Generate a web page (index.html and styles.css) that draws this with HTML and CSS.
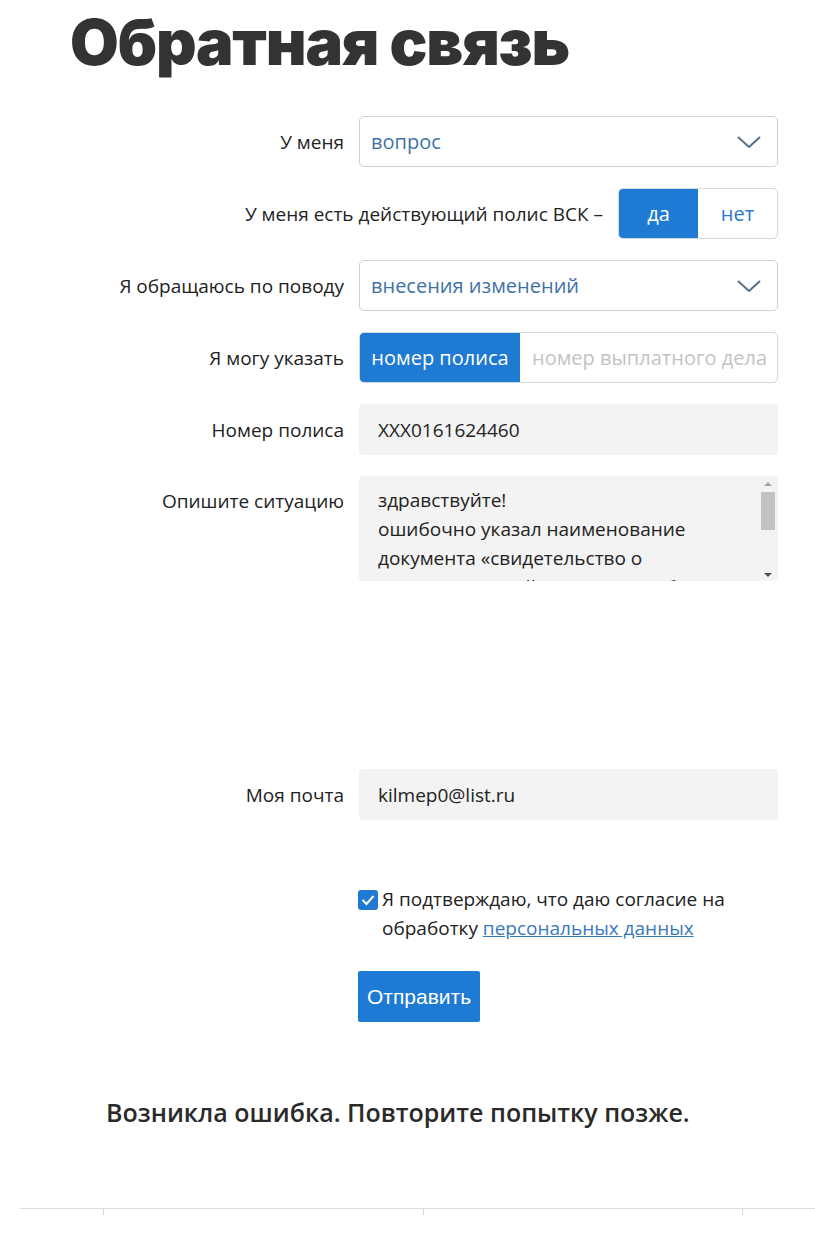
FILE: index.html
```html
<!DOCTYPE html>
<html lang="ru">
<head>
  <meta charset="UTF-8">
  <title>Обратная связь</title>
  <link rel="stylesheet" href="styles.css">
</head>
<body>
  <div class="page">
    <h1 class="title">Обратная связь</h1>

    <form class="feedback">
      <div class="row">
        <label class="label">У меня</label>
        <div class="select">
          <span>вопрос</span>
          <svg class="chevron" width="24" height="12" viewBox="0 0 24 12"><path d="M1 1 L12 11 L23 1" fill="none" stroke="#5b6f87" stroke-width="2"/></svg>
        </div>
      </div>

      <div class="row">
        <label class="label">У меня есть действующий полис ВСК –</label>
        <div class="toggle toggle-small">
          <span class="opt active">да</span>
          <span class="opt">нет</span>
        </div>
      </div>

      <div class="row">
        <label class="label">Я обращаюсь по поводу</label>
        <div class="select">
          <span>внесения изменений</span>
          <svg class="chevron" width="24" height="12" viewBox="0 0 24 12"><path d="M1 1 L12 11 L23 1" fill="none" stroke="#5b6f87" stroke-width="2"/></svg>
        </div>
      </div>

      <div class="row">
        <label class="label">Я могу указать</label>
        <div class="toggle toggle-wide">
          <span class="opt active">номер полиса</span>
          <span class="opt muted">номер выплатного дела</span>
        </div>
      </div>

      <div class="row">
        <label class="label">Номер полиса</label>
        <div class="input">XXX0161624460</div>
      </div>

      <div class="row row-top">
        <label class="label">Опишите ситуацию</label>
        <div class="textarea">
          <div class="textarea-text">здравствуйте!<br>ошибочно указал наименование документа «свидетельство о государственной регистрации брака»</div>
          <div class="scrollbar">
            <span class="arrow-up"></span>
            <span class="thumb"></span>
            <span class="arrow-down"></span>
          </div>
        </div>
      </div>

      <div class="row row-mail">
        <label class="label">Моя почта</label>
        <div class="input">kilmep0@list.ru</div>
      </div>

      <div class="agree">
        <span class="checkbox">
          <svg width="14" height="12" viewBox="0 0 14 12"><path d="M1.5 6 L5.5 10 L12.5 2" fill="none" stroke="#fff" stroke-width="2"/></svg>
        </span>
        <span class="agree-text">Я подтверждаю, что даю согласие на обработку <a href="#">персональных данных</a></span>
      </div>

      <div class="submit-row">
        <button type="button" class="submit">Отправить</button>
      </div>
    </form>

    <p class="error">Возникла ошибка. Повторите попытку позже.</p>
  </div>

  <div class="footer-line">
    <span class="tick"></span>
    <span class="tick"></span>
    <span class="tick"></span>
  </div>
</body>
</html>
```

FILE: styles.css
```css
body {
  margin: 0;
  background: #fff;
  font-family: 'Open Sans', sans-serif;
  color: #222;
}

.page {
  width: 815px;
  box-sizing: border-box;
  padding: 0 37px 0 0;
}

.title {
  margin: 0;
  padding: 2px 0 0 70px;
  font-family: 'Inter', sans-serif;
  font-weight: 900;
  font-size: 63px;
  line-height: 80px;
  color: #333;
  letter-spacing: -1.2px;
}

.feedback {
  margin-top: 34px;
  display: flex;
  flex-direction: column;
  gap: 21px;
}

.row {
  display: flex;
  justify-content: flex-end;
  align-items: center;
  gap: 15px;
}

.row-top {
  align-items: flex-start;
}

.row-top .label {
  padding-top: 12px;
}

.row-mail {
  margin-top: 167px;
}

.label {
  font-size: 19px;
  color: #222;
  text-align: right;
}

.select {
  width: 419px;
  height: 51px;
  box-sizing: border-box;
  border: 1px solid #c9d1da;
  border-radius: 5px;
  padding: 0 16px 0 11px;
  display: flex;
  align-items: center;
  justify-content: space-between;
  font-size: 20px;
  color: #3f72a6;
}

.toggle {
  height: 51px;
  box-sizing: border-box;
  border: 1px solid #d3d9df;
  border-radius: 5px;
  display: flex;
  overflow: hidden;
  font-size: 20px;
  white-space: nowrap;
}

.toggle-small {
  width: 160px;
}

.toggle-small .opt {
  flex: 1;
  justify-content: center;
}

.toggle-wide {
  width: 419px;
}

.toggle-wide .opt {
  flex: 1;
  padding: 0 12px;
  overflow: hidden;
}

.toggle-wide .opt.active {
  flex: none;
  width: 160px;
  box-sizing: border-box;
  justify-content: center;
}

.opt {
  display: flex;
  align-items: center;
  color: #2a79cc;
}

.opt.active {
  background: #1f7ad3;
  color: #fff;
}

.opt.muted {
  color: #c3c3c3;
}

.input {
  width: 419px;
  height: 51px;
  box-sizing: border-box;
  background: #f3f3f3;
  border-radius: 4px;
  padding: 0 19px;
  display: flex;
  align-items: center;
  font-size: 19px;
  color: #222;
}

.textarea {
  width: 419px;
  height: 105px;
  box-sizing: border-box;
  background: #f3f3f3;
  border-radius: 4px;
  display: flex;
  overflow: hidden;
}

.textarea-text {
  flex: 1;
  padding: 10px 12px 0 19px;
  font-size: 19px;
  line-height: 29px;
  color: #222;
}

.scrollbar {
  width: 16px;
  margin-right: 2px;
  display: flex;
  flex-direction: column;
  align-items: center;
  padding: 6px 0 4px;
}

.arrow-up {
  width: 0;
  height: 0;
  border-left: 4px solid transparent;
  border-right: 4px solid transparent;
  border-bottom: 4px solid #a3a3a3;
}

.thumb {
  width: 14px;
  height: 38px;
  margin: 6px 0 auto;
  background: #c1c1c1;
}

.arrow-down {
  width: 0;
  height: 0;
  border-left: 4px solid transparent;
  border-right: 4px solid transparent;
  border-top: 4px solid #505050;
}

.agree {
  margin: 44px 0 0 358px;
  display: flex;
  align-items: flex-start;
  gap: 4px;
  font-size: 19px;
  line-height: 29px;
  color: #222;
}

.checkbox {
  flex: none;
  width: 20px;
  height: 20px;
  margin-top: 5px;
  border-radius: 3px;
  background: #1f7ad3;
  display: flex;
  align-items: center;
  justify-content: center;
}

.agree-text {
  width: 360px;
}

.agree-text a {
  color: #3a79bb;
  text-decoration: underline;
}

.submit-row {
  margin: 7px 0 0 358px;
}

.submit {
  height: 51px;
  padding: 0 9px;
  border: none;
  border-radius: 2px;
  background: #1f7ad3;
  color: #fff;
  font-family: 'Liberation Sans', Arial, sans-serif;
  font-size: 21px;
  cursor: pointer;
}

.error {
  margin: 73px 0 0 106px;
  font-size: 25px;
  line-height: 34px;
  font-weight: 600;
  color: #2a2a2a;
}

.footer-line {
  margin: 79px 0 0 20px;
  border-top: 1px solid #dcdcdc;
  height: 10px;
  position: relative;
}

.tick {
  position: absolute;
  top: 0;
  width: 1px;
  height: 6px;
  background: #d6d6d6;
}

.tick:nth-child(1) { left: 83px; }
.tick:nth-child(2) { left: 403px; }
.tick:nth-child(3) { left: 722px; }
```
